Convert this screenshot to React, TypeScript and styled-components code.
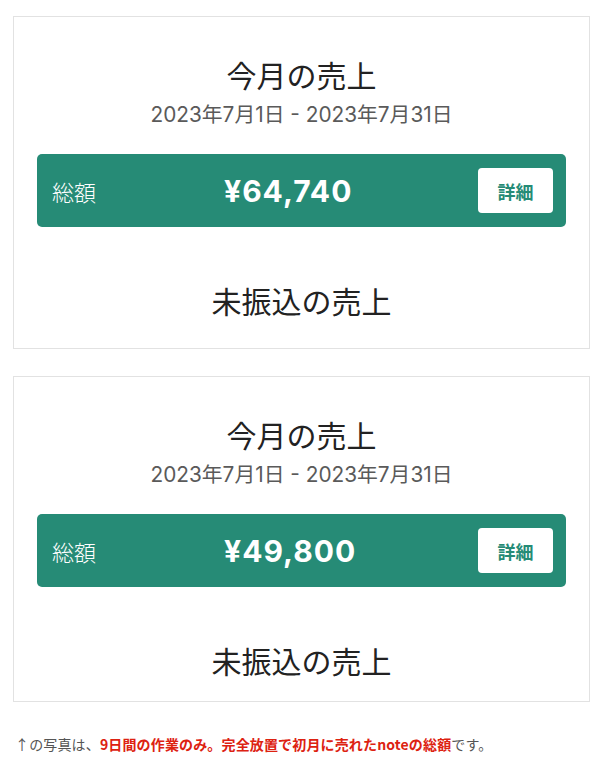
import React from "react";
import styled, { createGlobalStyle } from "styled-components";

const GlobalStyle = createGlobalStyle`
  body {
    margin: 0;
    background: #fff;
    font-family: "Noto Sans CJK JP", sans-serif;
  }
`;

type Sale = {
  total: string;
  tail: number;
};

const sales: Sale[] = [
  { total: "¥64,740", tail: 28 },
  { total: "¥49,800", tail: 21 },
];

const App = () => {
  return (
    <Page>
      <GlobalStyle />
      {sales.map((s, i) => (
        <Card key={i} tail={s.tail}>
          <Title>今月の売上</Title>
          <Period>2023年7月1日 - 2023年7月31日</Period>
          <TotalBar>
            <Label>総額</Label>
            <Amount>{s.total}</Amount>
            <DetailButton>詳細</DetailButton>
          </TotalBar>
          <Pending>未振込の売上</Pending>
        </Card>
      ))}
      <Note>
        ↑の写真は、
        <Strong>9日間の作業のみ。完全放置で初月に売れたnoteの総額</Strong>
        です。
      </Note>
    </Page>
  );
};

export default App;

const Page = styled.div`
  padding: 16px 17px 0 13px;
`;

const Card = styled.div<{ tail: number }>`
  border: 1px solid #e2e2e2;
  padding: 37px 23px ${(p) => p.tail}px;
  margin-bottom: 27px;
  text-align: center;
  color: #222;
`;

const Title = styled.div`
  font-size: 30px;
  line-height: 40px;
`;

const Period = styled.div`
  margin-top: 7px;
  font-family: Inter, "Noto Sans CJK JP", sans-serif;
  font-size: 20.8px;
  line-height: 28px;
  color: #5a5a5a;
`;

const TotalBar = styled.div`
  margin-top: 25px;
  height: 73px;
  background-color: #268b76;
  border-radius: 5px;
  display: flex;
  align-items: center;
  padding: 0 13px 0 15px;
  color: #fff;
`;

const Label = styled.div`
  font-size: 22px;
  font-weight: 300;
`;

const Amount = styled.div`
  margin-left: 128px;
  font-family: Inter, sans-serif;
  font-size: 30px;
  font-weight: 700;
  letter-spacing: 1px;
`;

const DetailButton = styled.div`
  margin-left: auto;
  width: 75px;
  height: 45px;
  background-color: #fff;
  border-radius: 4px;
  display: flex;
  align-items: center;
  justify-content: center;
  color: #268b76;
  font-size: 18px;
  font-weight: 700;
`;

const Pending = styled.div`
  margin-top: 53px;
  font-size: 30px;
  line-height: 40px;
`;

const Note = styled.p`
  margin: 30px 0 0 2px;
  font-size: 14px;
  line-height: 24px;
  color: #555;
  letter-spacing: 0.15px;
`;

const Strong = styled.strong`
  color: #dd2211;
  font-weight: 700;
`;
